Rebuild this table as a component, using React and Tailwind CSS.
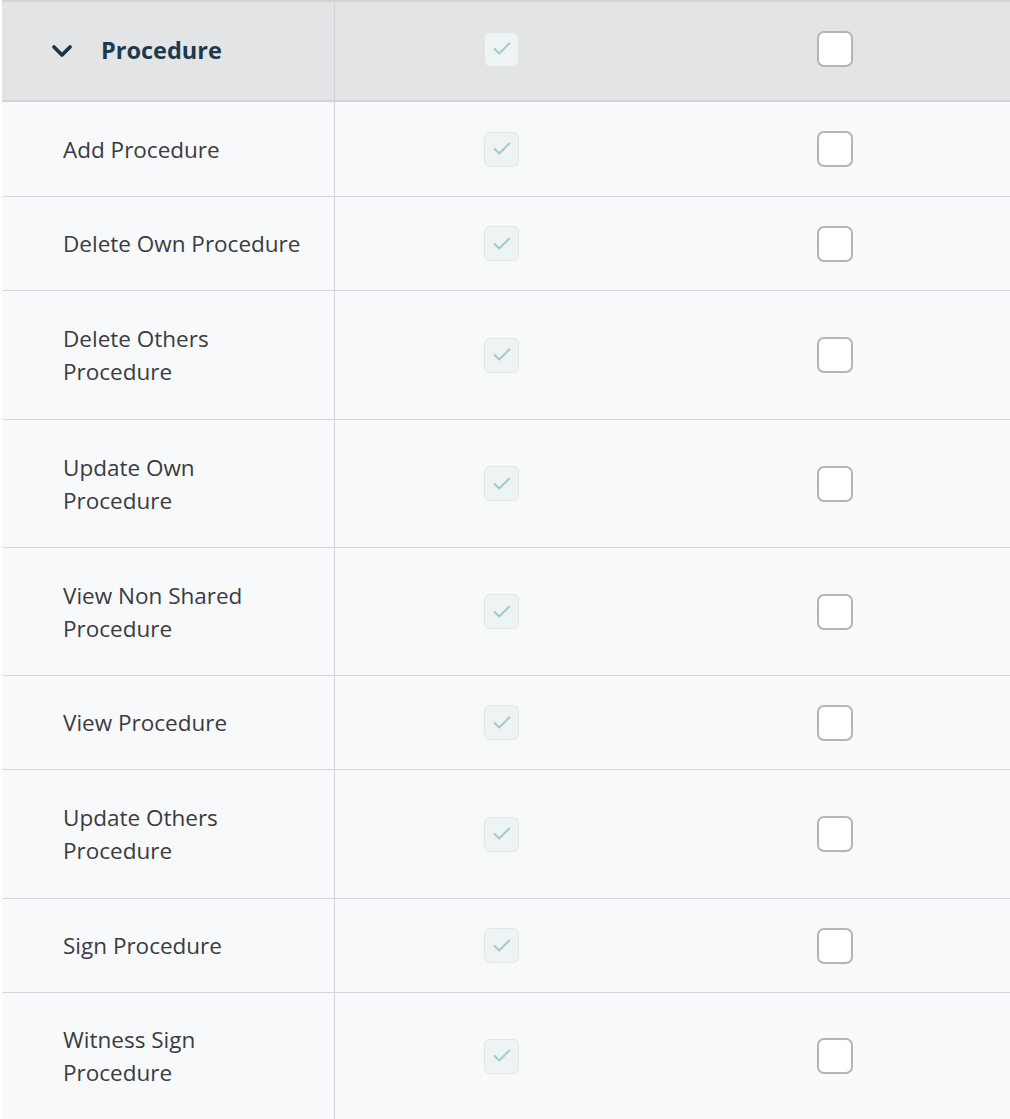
import { ChevronDown, Check } from "lucide-react";

const rows = [
  { label: "Add Procedure", h: "h-[95px]" },
  { label: "Delete Own Procedure", h: "h-[94px]" },
  { label: "Delete Others Procedure", h: "h-[129px]" },
  { label: "Update Own Procedure", h: "h-[128px]" },
  { label: "View Non Shared Procedure", h: "h-[128px]" },
  { label: "View Procedure", h: "h-[94px]" },
  { label: "Update Others Procedure", h: "h-[129px]" },
  { label: "Sign Procedure", h: "h-[94px]" },
  { label: "Witness Sign Procedure", h: "h-[127px]" },
];

function DisabledCheck() {
  return (
    <div className="w-[35px] h-[35px] rounded-[6px] border border-[#e1e6e6] bg-[#eef4f4] flex items-center justify-center">
      <Check size={22} strokeWidth={2.2} className="text-[#a3ccc7]" />
    </div>
  );
}

function EmptyCheck() {
  return (
    <div className="w-[36px] h-[36px] rounded-[7px] border-2 border-[#b4b5b6] bg-white"></div>
  );
}

export default function App() {
  return (
    <div className="w-[1010px] h-[1119px] overflow-hidden bg-white font-['Open_Sans',sans-serif]">
      <div className="ml-[2px] border-t-2 border-[#d2d4d6]">
        <div className="flex h-[100px] bg-[#e3e4e6] border-b-2 border-[#d2d5d8]">
          <div className="w-[333px] border-r border-[#d0d3d6] flex items-center pl-[44px]">
            <ChevronDown size={32} strokeWidth={2.8} className="text-[#1f3343]" />
            <span className="ml-[23px] text-[23.5px] font-bold text-[#1c3a4e]">
              Procedure
            </span>
          </div>
          <div className="w-[333px] flex items-center justify-center pb-[4px]">
            <DisabledCheck />
          </div>
          <div className="w-[333px] flex items-center justify-center pb-[4px]">
            <EmptyCheck />
          </div>
        </div>
        {rows.map((r) => (
          <div
            key={r.label}
            className={`flex ${r.h} bg-[#f8f9fa] border-b border-[#d5d8db]`}
          >
            <div className="w-[333px] border-r border-[#d0d3d6] flex items-center pl-[61px]">
              <span className="max-w-[241px] text-[22.5px] leading-[33px] text-[#3a3c3f]">
                {r.label}
              </span>
            </div>
            <div className="w-[333px] flex items-center justify-center">
              <DisabledCheck />
            </div>
            <div className="w-[333px] flex items-center justify-center">
              <EmptyCheck />
            </div>
          </div>
        ))}
      </div>
    </div>
  );
}
